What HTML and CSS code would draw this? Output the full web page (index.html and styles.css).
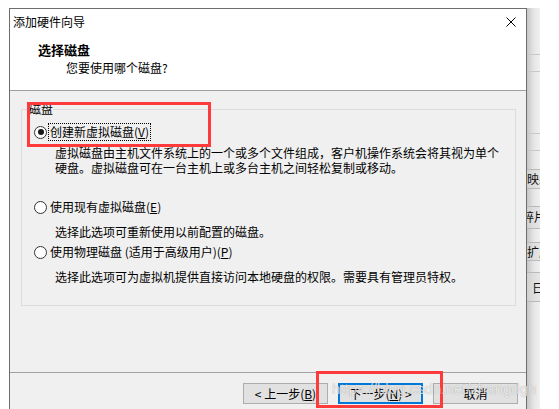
FILE: index.html
```html
<!DOCTYPE html>
<html lang="zh-CN">
<head>
    <meta charset="UTF-8">
    <title>添加硬件向导</title>
    <link rel="stylesheet" href="styles.css">
</head>
<body>
    <div class="desktop">
        <div class="wizard">
            <div class="titlebar">
                <span class="title">添加硬件向导</span>
                <svg class="close" width="10" height="10" viewBox="0 0 10 10">
                    <path d="M0.5 0.5 L9.5 9.5 M9.5 0.5 L0.5 9.5" stroke="#000" stroke-width="1" fill="none"/>
                </svg>
            </div>

            <div class="header">
                <h1>选择磁盘</h1>
                <p>您要使用哪个磁盘?</p>
            </div>

            <div class="content">
                <fieldset class="group">
                    <legend>磁盘</legend>

                    <div class="option">
                        <div class="radio-row">
                            <span class="radio checked"></span>
                            <span class="radio-text focused">创建新虚拟磁盘(<u>V</u>)</span>
                        </div>
                        <p class="desc">虚拟磁盘由主机文件系统上的一个或多个文件组成，客户机操作系统会将其视为单个<br>硬盘。虚拟磁盘可在一台主机上或多台主机之间轻松复制或移动。</p>
                    </div>

                    <div class="option">
                        <div class="radio-row">
                            <span class="radio"></span>
                            <span class="radio-text">使用现有虚拟磁盘(<u>E</u>)</span>
                        </div>
                        <p class="desc">选择此选项可重新使用以前配置的磁盘。</p>
                    </div>

                    <div class="option">
                        <div class="radio-row">
                            <span class="radio"></span>
                            <span class="radio-text">使用物理磁盘 (适用于高级用户)(<u>P</u>)</span>
                        </div>
                        <p class="desc">选择此选项可为虚拟机提供直接访问本地硬盘的权限。需要具有管理员特权。</p>
                    </div>
                </fieldset>
            </div>

            <div class="footer">
                <button class="btn">&lt; 上一步(<u>B</u>)</button>
                <button class="btn default">下一步(<u>N</u>) &gt;</button>
                <button class="btn">取消</button>
            </div>
        </div>

        <!-- 后面窗口露出的一条 -->
        <div class="behind">
            <div class="gap" style="height: 46px"></div>
            <div class="strip-row"></div>
            <div class="gap" style="height: 61px"></div>
            <div class="strip-row"></div>
            <div class="gap" style="height: 18px"></div>
            <div class="strip-btn" style="height: 20px">映射</div>
            <div class="gap" style="height: 17px"></div>
            <div class="strip-btn cut" style="height: 23px">碎片整理</div>
            <div class="gap" style="height: 13px"></div>
            <div class="strip-btn" style="height: 19px">扩展</div>
            <div class="gap" style="height: 11px"></div>
            <div class="strip-btn shift" style="height: 30px">日志</div>
        </div>
    </div>

    <!-- 截图上的标注 -->
    <div class="mark mark-radio"></div>
    <div class="mark mark-next"></div>
    <div class="watermark">https://blog.csdn.net/zhangdgh</div>
</body>
</html>
```

FILE: styles.css
```css
html, body {
    margin: 0;
    padding: 0;
    background: #fff;
    font-family: "Noto Sans CJK SC", "Noto Sans", sans-serif;
    font-size: 12px;
    color: #000;
    overflow: hidden;
    height: 409px;
}

.desktop {
    display: flex;
    align-items: flex-start;
    padding: 8px 0 0 9px;
}

.wizard {
    width: 518px;
    box-sizing: border-box;
    border: 1px solid #6e6e6e;
    border-bottom: none;
    background: #f0f0f0;
    flex-shrink: 0;
}

.titlebar {
    height: 26px;
    background: #fff;
    display: flex;
    justify-content: space-between;
    align-items: center;
    padding: 0 10px 0 3px;
}

.title {
    line-height: 16px;
}

.close {
    display: block;
}

.header {
    background: #fff;
    padding: 7px 0 14px 28px;
    border-bottom: 1px solid #a0a0a0;
}

.header h1 {
    margin: 0;
    font-size: 13px;
    font-weight: bold;
    line-height: 16px;
}

.header p {
    margin: 2px 0 0 28px;
    line-height: 16px;
}

.content {
    height: 281px;
    box-sizing: border-box;
    padding: 10px 10px 0 11px;
}

.group {
    margin: 0;
    padding: 0 8px 21px 7px;
    border: 1px solid #dcdcdc;
}

.group legend {
    padding: 0;
    line-height: 16px;
}

.option {
    margin-left: 5px;
}

.option:first-of-type {
    margin-top: 7px;
}

.option + .option {
    margin-top: 24px;
}

.option + .option + .option {
    margin-top: 5px;
}

.radio-row {
    display: flex;
    align-items: center;
    height: 16px;
}

.radio {
    width: 13px;
    height: 13px;
    box-sizing: border-box;
    border: 1px solid #333;
    border-radius: 50%;
    background: #fff;
    margin-right: 2px;
    position: relative;
    flex-shrink: 0;
}

.radio.checked::after {
    content: "";
    position: absolute;
    left: 2.5px;
    top: 2.5px;
    width: 6px;
    height: 6px;
    border-radius: 50%;
    background: #1a1a1a;
}

.radio-text {
    line-height: 16px;
    padding: 0 1px;
    white-space: nowrap;
}

.radio-text.focused {
    outline: 1px dotted #000;
    outline-offset: 0;
}

.desc {
    margin: 5px 0 0 21px;
    line-height: 15px;
    white-space: nowrap;
}

.option + .option .desc {
    margin-top: 9px;
}

.footer {
    border-top: 1px solid #a0a0a0;
    display: flex;
    justify-content: flex-end;
    gap: 10px;
    padding: 10px 8px 6px;
}

.btn {
    width: 85px;
    height: 21px;
    padding: 0;
    font-family: inherit;
    font-size: 12px;
    line-height: 16px;
    color: #000;
    background: #e1e1e1;
    border: 1px solid #adadad;
    border-radius: 0;
}

.btn.default {
    border-color: #0078d7;
    box-shadow: inset 0 0 0 1px #0078d7;
}

.behind {
    width: 13px;
    height: 401px;
    overflow: hidden;
    display: flex;
    flex-direction: column;
    background: linear-gradient(to right, #c6c6c6, #e4e4e4 50%, #f1f1f1);
}

.strip-row {
    height: 16px;
    border-top: 1px solid #c9c9c9;
    border-bottom: 1px solid #c9c9c9;
}

.strip-btn {
    flex-shrink: 0;
    box-sizing: border-box;
    border-top: 1px solid #b9b9b9;
    border-bottom: 1px solid #b9b9b9;
    background: linear-gradient(to right, #cfcfcf, #dedede 50%, #e6e6e6);
    white-space: nowrap;
    overflow: hidden;
    line-height: 18px;
    color: #111;
}

.strip-btn.cut {
    text-indent: -5px;
    line-height: 20px;
}

.strip-btn.shift {
    padding-left: 5px;
    line-height: 30px;
}

.gap {
    flex-shrink: 0;
}

.mark {
    position: absolute;
    box-sizing: border-box;
    border: 3px solid #ff3a3a;
}

.mark-radio {
    left: 27px;
    top: 102px;
    width: 184px;
    height: 45px;
}

.mark-next {
    left: 316px;
    top: 371px;
    width: 127px;
    height: 37px;
}

.watermark {
    position: absolute;
    left: 332px;
    top: 380px;
    font-family: "Liberation Sans", Arial, sans-serif;
    font-size: 15px;
    line-height: 18px;
    color: rgba(255, 255, 255, 0.75);
    text-shadow: 0 0 1px rgba(0, 0, 0, 0.35);
    white-space: nowrap;
}
```
